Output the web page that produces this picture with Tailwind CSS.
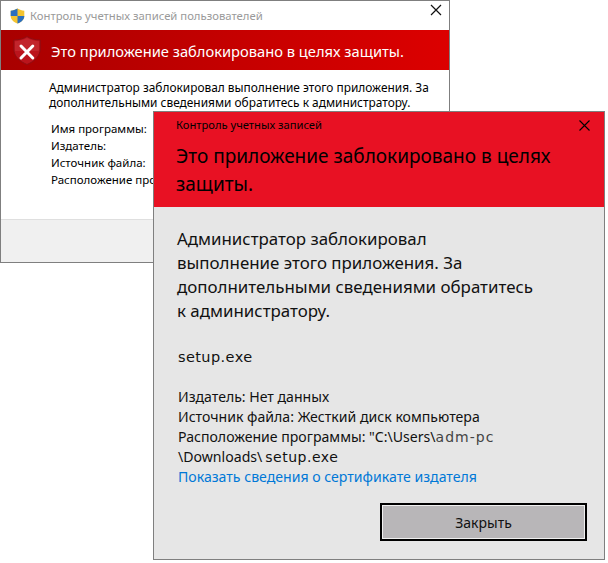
<!DOCTYPE html>
<html lang="ru"><head><meta charset="utf-8">
<script src="https://cdn.jsdelivr.net/npm/@tailwindcss/browser@4"></script>
</head>
<body class="bg-white">
<div class="relative w-[608px] h-[563px] overflow-hidden bg-white font-['Noto_Sans','Open_Sans',sans-serif]">
  <!-- back window -->
  <div class="absolute left-0 top-0 w-[450px] h-[263px] border border-[#7f7f7f] bg-white flex flex-col">
    <div class="h-[29px] flex items-center pl-[9px] relative">
      <svg width="15" height="16" viewBox="0 0 15 16" class="shrink-0"><path d="M7.500 0.500 C5.500 1.800 3 2.500 0.700 2.700 L0.700 8 C0.700 11.500 3.500 14 7.500 15.500 C11.500 14 14.300 11.500 14.300 8 L14.300 2.700 C12 2.500 9.500 1.800 7.500 0.500Z" fill="#f4c430"/><path d="M7.500 0.500 C5.500 1.800 3 2.500 0.700 2.700 L0.700 8 L7.500 8Z" fill="#2a6fc0"/><path d="M7.500 8 L14.300 8 C14.300 11.500 11.500 14 7.500 15.500Z" fill="#2a6fc0"/></svg>
      <span class="ml-[5px] text-[11.3px] leading-none text-[#9a9a9a]">Контроль учетных записей пользователей</span>
      <svg width="12" height="12" viewBox="0 0 12 12" class="absolute right-[7px] top-[3px]"><path d="M1 1L11 11M11 1L1 11" stroke="#111" stroke-width="1.200" fill="none"/></svg>
    </div>
    <div class="h-[40px] bg-gradient-to-r from-[#a80000] via-[#c40000] to-[#dc0000] flex items-center pl-[12px]">
      <svg width="28" height="29" viewBox="0 0 28 29" class="shrink-0"><path d="M14 0.500 C10.500 2.800 5.500 4 0.800 4 L0.800 13 C0.800 20 6.500 25.500 14 28.500 C21.500 25.500 27.200 20 27.200 13 L27.200 4 C22.500 4 17.500 2.800 14 0.500Z" fill="#bb141c" stroke="#8e0d12" stroke-width="1"/><path d="M14 2 C17.500 4 22 5.200 26 5.300 L26 13 C26 14 26 14 25.800 15 L2.200 15 C2 14 2 14 2 13 L2 5.300 C6 5.200 10.500 4 14 2Z" fill="#e0686c" opacity="0.2"/><path d="M8 10L19.800 22M19.800 10L8 22" stroke="#fff" stroke-width="3" fill="none" stroke-linecap="round"/></svg>
      <span class="ml-[10px] mt-[2px] text-[14.7px] leading-none text-white">Это приложение заблокировано в целях защиты.</span>
    </div>
    <div class="flex-1 pl-[48px] pt-[10px] text-[11.9px] leading-[15px] text-black">
      <p class="whitespace-nowrap">Администратор заблокировал выполнение этого приложения. За</p>
      <p class="whitespace-nowrap">дополнительными сведениями обратитесь к администратору.</p>
      <div class="mt-[10px] pl-[2px] text-[11.5px] leading-[17px]">
        <p>Имя программы:</p>
        <p>Издатель:</p>
        <p>Источник файла:</p>
        <p class="whitespace-nowrap">Расположение программы:</p>
      </div>
    </div>
    <div class="h-[43px] shrink-0 bg-[#f0f0f0] border-t border-[#dfdfdf]"></div>
  </div>
  <!-- front window -->
  <div class="absolute left-[153px] top-[111px] w-[452px] h-[449px] border border-[#7f7f7f] bg-[#e6e6e6] flex flex-col">
    <div class="h-[95px] shrink-0 bg-[#e81123] relative pl-[22px] pt-[5px] text-black">
      <p class="text-[11.2px] leading-[16px]">Контроль учетных записей</p>
      <p class="mt-[9px] w-[400px] text-[19px] leading-[28px]">Это приложение заблокировано в целях защиты.</p>
      <svg width="11" height="11" viewBox="0 0 11 11" class="absolute right-[14px] top-[8px]"><path d="M0.500 0.500L10.500 10.500M10.500 0.500L0.500 10.500" stroke="#000" stroke-width="1.100" fill="none"/></svg>
    </div>
    <div class="flex-1 pl-[24px] flex flex-col text-[#111]">
      <p class="mt-[20px] -ml-[1px] text-[16.9px] leading-[24px] w-[390px]">Администратор заблокировал<br>выполнение этого приложения. За<br>дополнительными сведениями обратитесь<br>к администратору.</p>
      <p class="mt-[20px] text-[14.5px] leading-[28px] font-['DejaVu_Sans',sans-serif] tracking-[0.4px]">setup.exe</p>
      <div class="mt-[16px] text-[14.1px] leading-[20px] whitespace-nowrap">
        <p>Издатель: Нет данных</p>
        <p>Источник файла: Жесткий диск компьютера</p>
        <p>Расположение программы: "C:\Users\<span class="font-['DejaVu_Sans',sans-serif] text-[14px] text-[#444] tracking-[1px]">adm-pc</span></p>
        <p>\Downloads\<span class="font-['DejaVu_Sans',sans-serif] text-[14px] tracking-[0.5px] ml-[3px]">setup.exe</span></p>
        <p class="text-[#0078d7]">Показать сведения о сертификате издателя</p>
      </div>
      <div class="mt-[16px] mr-[17px] self-end w-[207px] h-[38px] border-[2px] border-black bg-[#b8b6b8] shadow-[inset_0_0_0_1px_#f0f0f0] flex items-center justify-center text-[14px]">Закрыть</div>
    </div>
  </div>
</div>
</body></html>
